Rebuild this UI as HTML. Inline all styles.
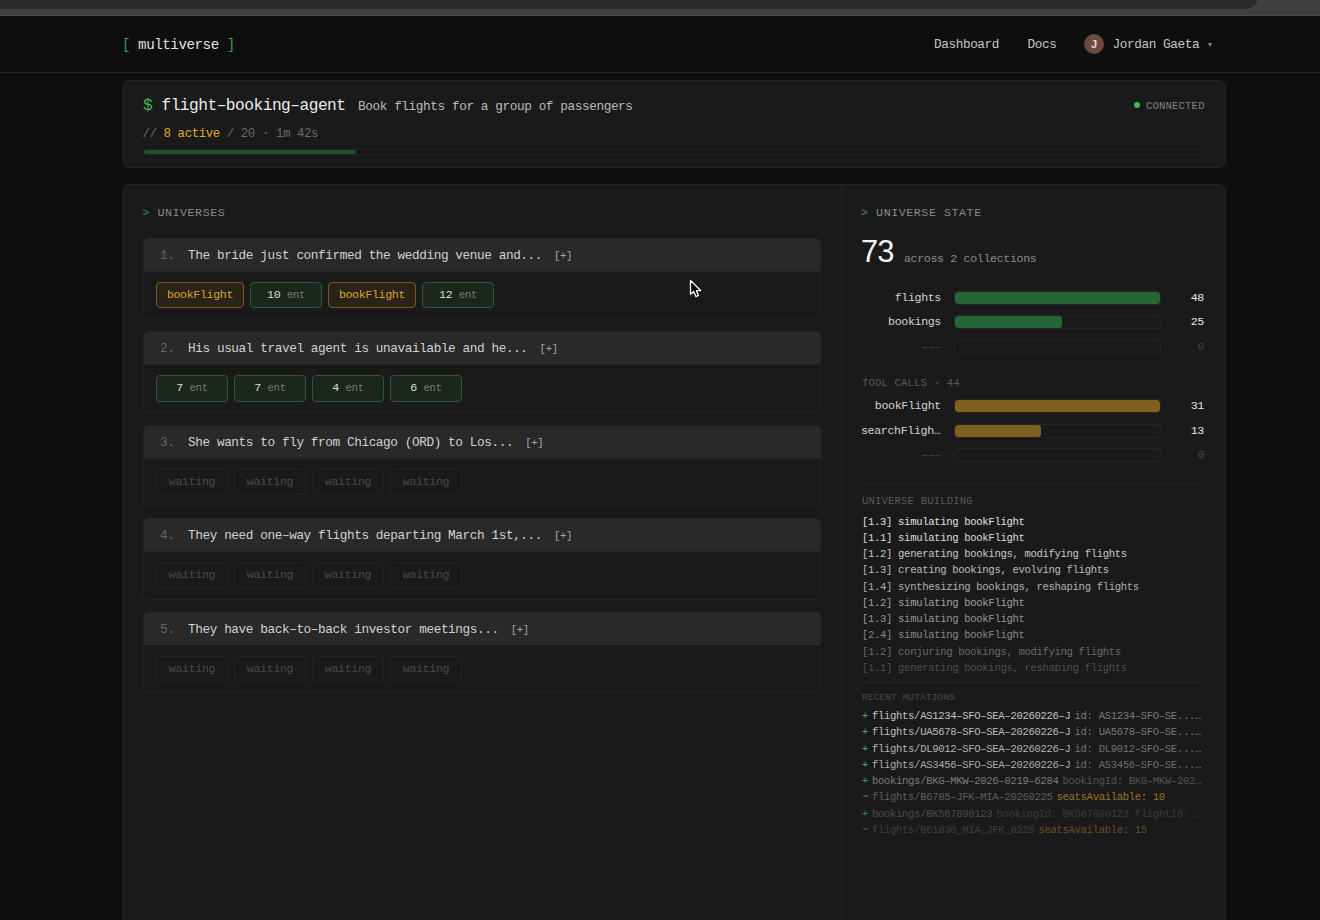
<!DOCTYPE html>
<html><head><meta charset="utf-8">
<style>
*{box-sizing:border-box;margin:0;padding:0}
html,body{width:1320px;height:920px;overflow:hidden;background:#0e0e0e;font-family:"Liberation Mono",monospace;color:#d8d8d8}
.a{position:absolute;white-space:pre}
#tb{position:absolute;left:0;top:0;width:1320px;height:16px;background:#404040;border-bottom:1px solid #4b4b4b}
#tb i{position:absolute;left:0;top:0;width:1257px;height:9px;background:#2b2b2b;border-bottom-right-radius:12px 9px}
#hdr{position:absolute;left:0;top:16px;width:1320px;height:57px;border-bottom:1px solid #242424}
.logo{left:122px;top:36px;line-height:18px;font-size:14.204px;letter-spacing:-0.455px;color:#e4e4e4}
.logo b{font-weight:normal;color:#3a9d50}
.nav{top:37px;line-height:16px;font-size:12.720px;letter-spacing:-0.407px;color:#c6c6c6}
.avatar{position:absolute;left:1084px;top:34px;width:20px;height:20px;border-radius:50%;background:#6b4a40}
.avatar span{position:absolute;left:0;top:0;width:20px;text-align:center;font-family:"Liberation Sans",sans-serif;font-size:11px;line-height:21px;font-weight:bold;color:#e6d9d3}
.caret{position:absolute;left:1207.5px;top:43px;width:0;height:0;border-left:2.5px solid transparent;border-right:2.5px solid transparent;border-top:4px solid #8a8a8a}
.card{position:absolute;background:#1a1a1a;border:1px solid #242424;border-radius:7px}
.t1{left:143px;top:96px;line-height:20px;font-size:16.218px;letter-spacing:-0.519px;color:#ededed}
.t1 b{font-weight:normal;color:#3fb950}
.desc{left:358px;top:99px;line-height:16px;font-size:12.720px;letter-spacing:-0.407px;color:#bcbcbc}
.t2{left:142.5px;top:126px;line-height:16px;font-size:12.370px;letter-spacing:-0.396px;color:#6b6b6b}
.t2 b{font-weight:normal;color:#e5a823}
.conn{left:1146px;top:100px;line-height:12px;font-size:10.600px;letter-spacing:0.160px;color:#828282}
.dot{position:absolute;left:1134px;top:102px;width:6px;height:6px;border-radius:50%;background:#3fb950}
.prog{position:absolute;left:143px;top:149px;width:1062px;height:6px;border:1px solid #222;border-radius:3px;background:#171717}
.prog i{position:absolute;left:0;top:0;height:4px;width:212px;background:#1f5230;border-radius:2px}
.divider{position:absolute;left:841px;top:185px;width:1px;height:740px;background:#222}
.sec{top:206px;line-height:14px;font-size:11.660px;letter-spacing:0.547px;color:#8a8a8a}
.sec b{font-weight:normal;color:#2f9a48}
.uc{position:absolute;left:143px;width:678px;height:81.4px;border:1px solid #242424;border-radius:5px;background:#1a1a1a;overflow:hidden}
.uh{position:relative;height:33px;background:#292929;border-bottom:1px solid #222;white-space:pre;font-size:12.720px;letter-spacing:-0.407px;color:#d2d2d2}
.uh .num{position:absolute;left:16px;top:1px;line-height:32px;color:#666}
.uh .txt{position:absolute;left:44px;top:1px;line-height:32px;}
.uh .plus{font-size:10.600px;letter-spacing:-0.340px;color:#a8a8a8;margin-left:12px}
.ub{padding:10px 12px;display:flex;gap:6px}
.chip{position:relative;height:26.4px;width:72px;border-radius:4px;border:1px solid #2a2a2a;white-space:pre;font-size:11.660px;letter-spacing:-0.373px;}
.chip.w88{width:88px}
.chip span.c{position:absolute;left:0;right:0;text-align:center;top:4px;line-height:16px;}
.chip.tool{border-color:#7a5a1e;background:#29231a;color:#d9a52b}
.chip.ent{border-color:#2a5a36;background:#1c261f;color:#dcdcdc}
.chip.ent span.e{font-size:10.600px;letter-spacing:-0.340px;color:#7a7a7a}
.chip.wait{border-color:#242424;background:#1a1a1a;color:#4a4a4a}
.big{left:861px;font-family:"Liberation Sans",sans-serif;font-size:31px;letter-spacing:-1px;line-height:34px;top:235px;color:#f2f2f2}
.across{left:904px;top:252px;line-height:14px;font-size:11.660px;letter-spacing:-0.373px;color:#8a8a8a}
.brow{position:absolute;left:862px;width:343px;height:14px}
.lb{position:absolute;left:0;width:80px;text-align:right;font-size:11.660px;letter-spacing:-0.373px;color:#d2d2d2;white-space:nowrap;overflow:hidden;text-overflow:ellipsis}
.lb.dim{color:#454545}
.tr{position:absolute;left:954px;width:207px;height:14px;border-radius:4px;border:1px solid #262626;background:#1a1a1a;overflow:hidden}
.tr i{position:absolute;left:0;top:0;height:12px;border-radius:3px}
.tr i.g{background:#256536}
.tr i.y{background:#80601f}
.vl{position:absolute;right:0;font-size:11.660px;letter-spacing:-0.373px;color:#e6e6e6;white-space:pre}
.vl.dim{color:#454545}
.sub{left:862px;top:-9px;line-height:12px;font-size:10.600px;letter-spacing:0.160px;color:#5a5a5a}
.hl{position:absolute;left:862px;width:343px;height:1px;background:#262626}
.log div{position:absolute;left:862px;font-size:10.600px;letter-spacing:-0.340px;white-space:pre}
.mut div{position:absolute;left:862px;width:343px;display:flex;white-space:pre;font-size:10.600px;letter-spacing:-0.340px;}
.mut .op{width:10px;flex:none}
.mut .p{flex:none;margin-right:4px}
.mut .dt{flex:1 1 auto;min-width:0;overflow:hidden;text-overflow:ellipsis;white-space:nowrap}

</style></head><body>
<div id="tb"><i></i></div>
<div id="hdr"></div>
<div class="a logo"><b>[</b> multiverse <b>]</b></div>
<div class="a nav" style="left:934px">Dashboard</div>
<div class="a nav" style="left:1027.5px">Docs</div>
<div class="avatar"><span>J</span></div>
<div class="a nav" style="left:1112.5px">Jordan Gaeta</div>
<div class="caret"></div>
<div class="card" style="left:122px;top:80px;width:1104px;height:88px"></div>
<div class="a t1"><b>$</b> flight&#8211;booking&#8211;agent</div>
<div class="a desc">Book flights for a group of passengers</div>
<div class="a t2">// <b>8 active</b> / 20 · 1m 42s</div>
<div class="dot"></div>
<div class="a conn">CONNECTED</div>
<div class="prog"><i></i></div>
<div class="card" style="left:122px;top:184px;width:1104px;height:800px"></div>
<div class="divider"></div>
<div class="a sec" style="left:142.3px"><b>&gt;</b> UNIVERSES</div>
<div class="uc" style="top:238.0px"><div class="uh"><span class="num">1.</span><span class="txt">The bride just confirmed the wedding venue and...<span class="plus">[+]</span></span></div><div class="ub"><div class="chip tool w88"><span class="c">bookFlight</span></div><div class="chip ent"><span class="c">10 <span class="e">ent</span></span></div><div class="chip tool w88"><span class="c">bookFlight</span></div><div class="chip ent"><span class="c">12 <span class="e">ent</span></span></div></div></div>
<div class="uc" style="top:331.4px"><div class="uh"><span class="num">2.</span><span class="txt">His usual travel agent is unavailable and he...<span class="plus">[+]</span></span></div><div class="ub"><div class="chip ent"><span class="c">7 <span class="e">ent</span></span></div><div class="chip ent"><span class="c">7 <span class="e">ent</span></span></div><div class="chip ent"><span class="c">4 <span class="e">ent</span></span></div><div class="chip ent"><span class="c">6 <span class="e">ent</span></span></div></div></div>
<div class="uc" style="top:424.8px"><div class="uh"><span class="num">3.</span><span class="txt">She wants to fly from Chicago (ORD) to Los...<span class="plus">[+]</span></span></div><div class="ub"><div class="chip wait"><span class="c">waiting</span></div><div class="chip wait"><span class="c">waiting</span></div><div class="chip wait"><span class="c">waiting</span></div><div class="chip wait"><span class="c">waiting</span></div></div></div>
<div class="uc" style="top:518.2px"><div class="uh"><span class="num">4.</span><span class="txt">They need one&#8211;way flights departing March 1st,...<span class="plus">[+]</span></span></div><div class="ub"><div class="chip wait"><span class="c">waiting</span></div><div class="chip wait"><span class="c">waiting</span></div><div class="chip wait"><span class="c">waiting</span></div><div class="chip wait"><span class="c">waiting</span></div></div></div>
<div class="uc" style="top:611.6px"><div class="uh"><span class="num">5.</span><span class="txt">They have back&#8211;to&#8211;back investor meetings...<span class="plus">[+]</span></span></div><div class="ub"><div class="chip wait"><span class="c">waiting</span></div><div class="chip wait"><span class="c">waiting</span></div><div class="chip wait"><span class="c">waiting</span></div><div class="chip wait"><span class="c">waiting</span></div></div></div>
<div class="a sec" style="left:861px"><b>&gt;</b> UNIVERSE STATE</div>
<div class="a big">73</div>
<div class="a across">across 2 collections</div>
<div class="a lb" style="left:861px;top:291px;line-height:14px;">flights</div><div class="tr" style="top:291px"><i class="g" style="width:205px"></i></div><div class="a vl" style="left:auto;right:116px;top:291px;line-height:14px;">48</div>
<div class="a lb" style="left:861px;top:315px;line-height:14px;">bookings</div><div class="tr" style="top:315px"><i class="g" style="width:107px"></i></div><div class="a vl" style="left:auto;right:116px;top:315px;line-height:14px;">25</div>
<div class="a lb dim" style="left:861px;top:340px;line-height:14px;">&#8211;&#8211;&#8211;</div><div class="tr" style="top:340px"></div><div class="a vl dim" style="left:auto;right:116px;top:340px;line-height:14px;">0</div>
<div class="a sub" style="top:377px;line-height:12px;">TOOL CALLS · 44</div>
<div class="a lb" style="left:861px;top:399px;line-height:14px;">bookFlight</div><div class="tr" style="top:399px"><i class="y" style="width:205px"></i></div><div class="a vl" style="left:auto;right:116px;top:399px;line-height:14px;">31</div>
<div class="a lb" style="left:861px;top:424px;line-height:14px;">searchFlights</div><div class="tr" style="top:424px"><i class="y" style="width:86px"></i></div><div class="a vl" style="left:auto;right:116px;top:424px;line-height:14px;">13</div>
<div class="a lb dim" style="left:861px;top:448px;line-height:14px;">&#8211;&#8211;&#8211;</div><div class="tr" style="top:448px"></div><div class="a vl dim" style="left:auto;right:116px;top:448px;line-height:14px;">0</div>
<div class="hl" style="top:484px"></div>
<div class="a sub" style="top:495px;line-height:12px;">UNIVERSE BUILDING</div>
<div class="log"><div style="top:515px;line-height:14px;color:#e0e0e0">[1.3] simulating bookFlight</div><div style="top:531px;line-height:14px;color:#dadada">[1.1] simulating bookFlight</div><div style="top:547px;line-height:14px;color:#c8c8c8">[1.2] generating bookings, modifying flights</div><div style="top:563px;line-height:14px;color:#bdbdbd">[1.3] creating bookings, evolving flights</div><div style="top:580px;line-height:14px;color:#b0b0b0">[1.4] synthesizing bookings, reshaping flights</div><div style="top:596px;line-height:14px;color:#a0a0a0">[1.2] simulating bookFlight</div><div style="top:612px;line-height:14px;color:#959595">[1.3] simulating bookFlight</div><div style="top:628px;line-height:14px;color:#878787">[2.4] simulating bookFlight</div><div style="top:645px;line-height:14px;color:#6a6a6a">[1.2] conjuring bookings, modifying flights</div><div style="top:661px;line-height:14px;color:#4e4e4e">[1.1] generating bookings, reshaping flights</div></div>
<div class="hl" style="top:682px"></div>
<div class="a sub" style="top:692px;line-height:12px;font-size:9.540px;letter-spacing:0.094px;color:#4a4a4a">RECENT MUTATIONS</div>
<div class="mut"><div style="top:709px;line-height:14px;"><span class="op" style="color:#3fb950">+</span><span class="p" style="color:#c4c4c4">flights/AS1234&#8211;SFO&#8211;SEA&#8211;20260226&#8211;J</span><span class="dt" style="color:#7a7a7a">id: AS1234&#8211;SFO&#8211;SE...., airline: AS</span></div><div style="top:725px;line-height:14px;"><span class="op" style="color:#3fb950">+</span><span class="p" style="color:#bcbcbc">flights/UA5678&#8211;SFO&#8211;SEA&#8211;20260226&#8211;J</span><span class="dt" style="color:#777777">id: UA5678&#8211;SFO&#8211;SE...., airline: UA</span></div><div style="top:742px;line-height:14px;"><span class="op" style="color:#3fb950">+</span><span class="p" style="color:#b4b4b4">flights/DL9012&#8211;SFO&#8211;SEA&#8211;20260226&#8211;J</span><span class="dt" style="color:#737373">id: DL9012&#8211;SFO&#8211;SE...., airline: DL</span></div><div style="top:758px;line-height:14px;"><span class="op" style="color:#3fb950">+</span><span class="p" style="color:#aaaaaa">flights/AS3456&#8211;SFO&#8211;SEA&#8211;20260226&#8211;J</span><span class="dt" style="color:#6e6e6e">id: AS3456&#8211;SFO&#8211;SE...., airline: AS</span></div><div style="top:774px;line-height:14px;"><span class="op" style="color:#36a84b">+</span><span class="p" style="color:#7c7c7c">bookings/BKG&#8211;MKW&#8211;2026&#8211;0219&#8211;6284</span><span class="dt" style="color:#555555">bookingId: BKG&#8211;MKW&#8211;2026&#8211;0219&#8211;6284</span></div><div style="top:790px;line-height:14px;"><span class="op" style="color:#a67c22">~</span><span class="p" style="color:#5e5e5e">flights/B6785&#8211;JFK&#8211;MIA&#8211;20260225</span><span class="dt" style="color:#9a7426">seatsAvailable: 10</span></div><div style="top:807px;line-height:14px;"><span class="op" style="color:#2f8a42">+</span><span class="p" style="color:#4c4c4c">bookings/BK567890123</span><span class="dt" style="color:#3a3a3a">bookingId: BK567890123 flightId: FL1</span></div><div style="top:823px;line-height:14px;"><span class="op" style="color:#7a5e1e">~</span><span class="p" style="color:#3e3e3e">flights/B61830_MIA_JFK_0228</span><span class="dt" style="color:#6a5220">seatsAvailable: 15</span></div></div>
<svg style="position:absolute;left:689px;top:279px" width="14" height="20" viewBox="0 0 14 20"><path d="M1.5 1.5 L1.5 15.2 L4.7 12.4 L6.9 17.6 L9.5 16.5 L7.4 11.7 L11.6 11.5 Z" fill="#000" stroke="#fff" stroke-width="1.3" stroke-linejoin="round"/></svg>
</body></html>
